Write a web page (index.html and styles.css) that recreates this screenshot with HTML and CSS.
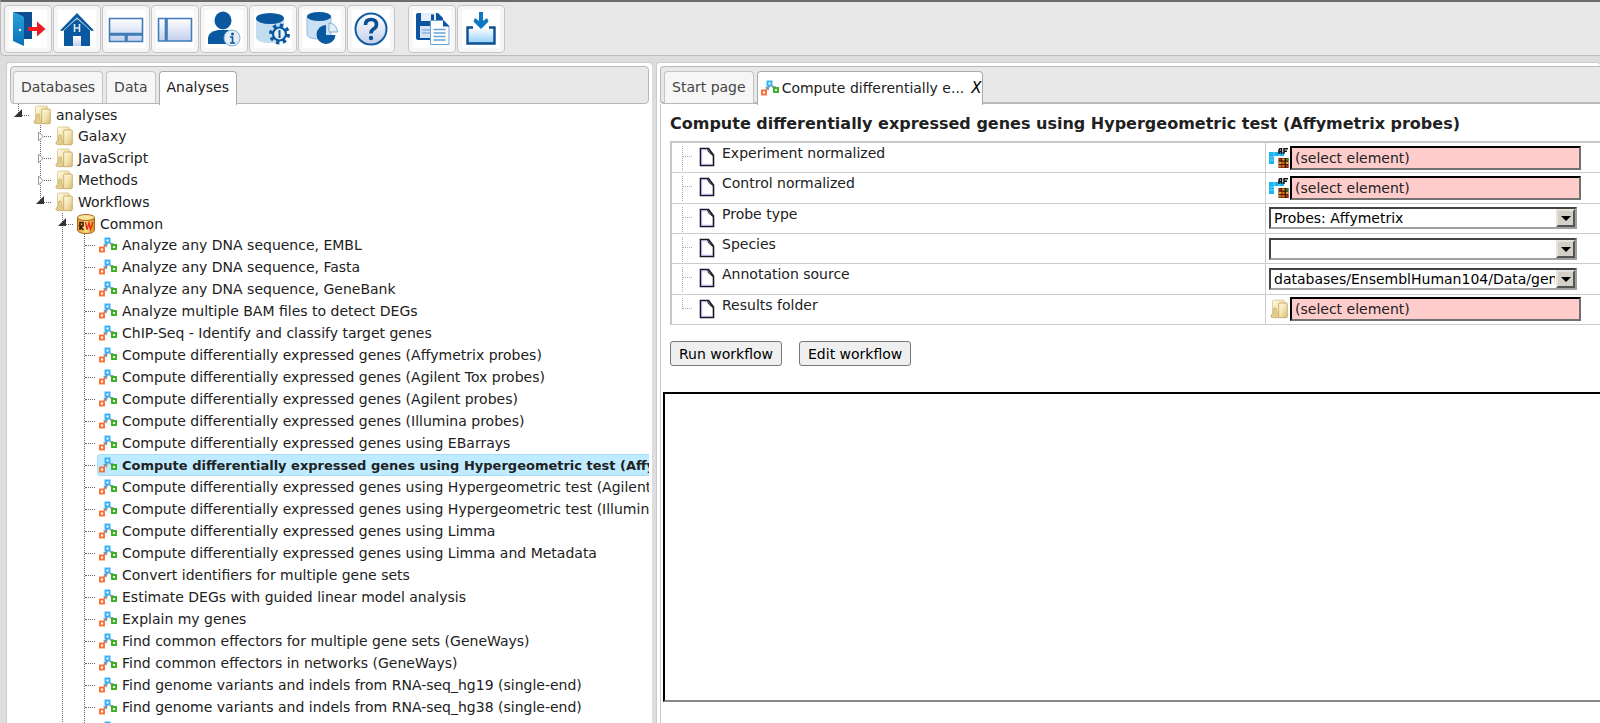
FILE: index.html
```
<!DOCTYPE html>
<html lang="en">
<head>
<meta charset="utf-8">
<title>Compute differentially expressed genes</title>
<link rel="stylesheet" href="styles.css">
</head>
<body>
<svg class="sprite" aria-hidden="true">
  <defs>
    <linearGradient id="g-folder" x1="0" x2="1" y1="0" y2="1"><stop offset="0" stop-color="#fffbe6"/><stop offset=".5" stop-color="#f3e3ae"/><stop offset="1" stop-color="#d8bd78"/></linearGradient>
    <linearGradient id="g-pane" x1="0" x2="0" y1="0" y2="1"><stop offset="0" stop-color="#fff"/><stop offset="1" stop-color="#c3cfec"/></linearGradient>
    <linearGradient id="g-door" x1="0" x2="0" y1="0" y2="1"><stop offset="0" stop-color="#2aa3e0"/><stop offset="1" stop-color="#0a6fb5"/></linearGradient>
    <linearGradient id="g-tray" x1="0" x2="0" y1="0" y2="1"><stop offset="0" stop-color="#fff"/><stop offset="1" stop-color="#8fd0fb"/></linearGradient>
    <linearGradient id="g-gold" x1="0" x2="1" y1="0" y2="0"><stop offset="0" stop-color="#e89a20"/><stop offset=".5" stop-color="#fbe08a"/><stop offset="1" stop-color="#dd8d18"/></linearGradient>
  </defs>
  <symbol id="folder" viewBox="0 0 18 20">
    <path d="M0 17l3-3v5z" fill="#ccc"/>
    <path d="M2.500 2.500Q2.500 1 4 1h9q1.500 0 1.500 1.500V15l-5 3.500h-7z" fill="url(#g-folder)" stroke="#d3bb7e" stroke-width=".7"/>
    <path d="M1 18q0-3.500 2.500-4V9.500q1.500-1.500 3 0V14q2 .5 2 4.500-3 1-7.500-.5z" fill="#e2cc90" stroke="#c9ae69" stroke-width=".6"/>
    <rect x="8.700" y="4" width="8.600" height="14.700" rx="1" fill="url(#g-folder)" stroke="#bea35e" stroke-width=".8"/>
  </symbol>
  <symbol id="flow" viewBox="0 0 18 16">
    <path d="M5 10l3-4M11 6l3.500 3" fill="none" stroke="#9aa3a8" stroke-width="1.800"/>
    <path d="M4 7.500l5-1.500-1.500 4.500zM11 6.500l3.500-.5v4z" fill="#8b9499"/>
    <rect x="6.500" y="1.500" width="4" height="4" fill="#fff" stroke="#2fb0f8" stroke-width="1.900"/>
    <rect x="1" y="10.500" width="4" height="4" fill="#fff" stroke="#fb6f33" stroke-width="1.900"/>
    <rect x="13" y="8" width="4" height="4" fill="#e9fbe4" stroke="#37ae20" stroke-width="1.900"/>
  </symbol>
  <symbol id="page" viewBox="0 0 16 20">
    <path d="M1.500 1.500h8L14.500 8v10.500h-13z" fill="#fff" stroke="#15152a" stroke-width="1.600"/>
    <path d="M2.700 17.500V2.700h5.500M2.700 17.300h10.600" fill="none" stroke="#aaaee8"/>
    <path d="M8.500 1.500L9.500 5l5 4z" fill="#aaa" stroke="#333" stroke-width="1"/>
  </symbol>
  <symbol id="affy" viewBox="0 0 20 20">
    <path d="M0 4h15v4H5v8H0z" fill="#19b5f2"/><path d="M1 9h4M5 4v4M10 4v4M1 12h4" stroke="#8de0ff" stroke-width=".8"/>
    <path d="M10 6V2l1-1.500h1.500V6M10 3.500h2.500M15 6V.8h4M15 3.300h3" fill="none" stroke="#111" stroke-width="1.500"/>
    <rect x="9.500" y="10" width="10" height="10" fill="#3a1c08"/>
    <path d="M10 10.500h2.500v2H10zM17 17h2.500v2.500H17z" fill="#c22617"/>
    <path d="M13.200 10.500h2.300v2h-2.300zM10 13.700h2.500v2.300H10zM17 13.700h2.300V16H17z" fill="#f39a1e"/>
    <path d="M17 10.500h2.500v2H17z" fill="#2c9a34"/><path d="M13.200 13.700h2.300V16h-2.300zM13.200 17h2.300v2.500h-2.300zM10 17h2.500v2.500H10z" fill="#e3701a"/>
  </symbol>
</svg>

<nav class="toolbar" aria-label="Main">
  <button class="tool" aria-label="Log out"><svg viewBox="0 0 36 36"><path d="M13 2h9v26h-9z" fill="#0b4f93"/><path d="M3 1l11 5v29L3 30z" fill="url(#g-door)"/><path d="M3 1h19v18h-8V6z" fill="#0b4f93"/><circle cx="10" cy="19" r="1.200" fill="#fff"/><path d="M18 16h9v-5.500l8.500 7.500-8.500 7.500V20h-9z" fill="#ed1c24"/></svg></button>
  <button class="tool" aria-label="Home"><svg viewBox="0 0 36 36"><path d="M5 18L18 8l13 10v17H5z" fill="#0a59a0"/><path d="M1 19.500L18 2l17 17.500-3 .5L18 7 4 20z" fill="#0a59a0"/><path d="M4 20L18 6.800 32 20" fill="none" stroke="#dbe8f5" stroke-width=".8"/><path d="M15.500 13v8M20.500 13v8M15.500 17h5" stroke="#dbe8f5" stroke-width="1.600"/><path d="M14 25h8v10h-8z" fill="url(#g-pane)"/></svg></button>
  <button class="tool" aria-label="Bottom pane layout"><svg viewBox="0 0 36 36"><path d="M1.500 7.500h33v15h-33zM1.500 24h16v6.500h-16zM19 24h15.500v6.500H19z" fill="url(#g-pane)" stroke="#3f7cb8" stroke-width="1.600"/></svg></button>
  <button class="tool" aria-label="Side pane layout"><svg viewBox="0 0 36 36"><path d="M1.500 7.500H8.500v22.500h-7zM10 7.500h24.500v22.500H10z" fill="url(#g-pane)" stroke="#3f7cb8" stroke-width="1.600"/></svg></button>
  <button class="tool" aria-label="User info"><svg viewBox="0 0 36 36"><ellipse cx="17" cy="9.500" rx="8.500" ry="9" fill="#0a59a0"/><path d="M2 33v-6q0-6 10-8h10q10 2 10 8v6z" fill="#0a59a0"/><circle cx="26" cy="27" r="8" fill="#e4edf7" stroke="#7fb0d5"/><circle cx="26.500" cy="23" r="1.500" fill="#0a59a0"/><path d="M24 26h2.500v6M24 32h5" fill="none" stroke="#0a59a0" stroke-width="1.600"/></svg></button>
  <button class="tool" aria-label="Database settings"><svg viewBox="0 0 36 36"><path d="M1 7v20q2 5 14 5t14-5V7z" fill="#c3ddf0"/><ellipse cx="15" cy="7.500" rx="14" ry="5.500" fill="#0a59a0"/><circle cx="24.500" cy="23" r="8.500" fill="none" stroke="#0a59a0" stroke-width="4" stroke-dasharray="3.300 3.375"/><circle cx="24.500" cy="23" r="6.500" fill="#e8f2fa" stroke="#0a59a0" stroke-width="2.200"/><path d="M24.500 19v8" stroke="#0a59a0" stroke-width="2"/></svg></button>
  <button class="tool" aria-label="Database statistics"><svg viewBox="0 0 36 36"><path d="M3 6v18q2 4 12 4t12-4V6z" fill="#c9e1f2" stroke="#8dbcdc"/><ellipse cx="15" cy="5.500" rx="12" ry="4.500" fill="#0a59a0"/><path d="M22 14a9.500 9.500 0 1 0 9.500 10H22z" fill="#0a59a0"/><path d="M25 12q8 1 8.500 9H25z" fill="#e4eff8" stroke="#7fb0d5"/></svg></button>
  <button class="tool" aria-label="Help"><svg viewBox="0 0 36 36"><circle cx="18" cy="18" r="15.500" fill="url(#g-pane)" stroke="#0f5ca3" stroke-width="2"/><path d="M12.500 14q0-5.500 5.500-5.500t5.500 5q0 3-3 4.500-2.500 1.500-2.500 4.500" fill="none" stroke="#0b4f93" stroke-width="3.600"/><circle cx="18" cy="27" r="2.200" fill="#0b4f93"/></svg></button>
  <span class="tool-gap"></span>
  <button class="tool" aria-label="Save a copy"><svg viewBox="0 0 36 36"><path d="M4 2h20l5 5v20q0 2-2 2H4q-2 0-2-2V4q0-2 2-2z" fill="#0b55a0"/><path d="M7 2h15v8H7z" fill="#e6eefb"/><path d="M17 3.500h3V9h-3z" fill="#0b55a0"/><path d="M6 15h18v12H6z" fill="#d6e2f6"/><path d="M8 19h8M8 22h8" stroke="#6a9bd0"/><path d="M16.500 9.500H30l5 5.500v18.500H16.500z" fill="#fff" stroke="#6aa3d4"/><path d="M29 9v6.500h6.500z" fill="#0b55a0"/><path d="M19.500 18.500h12M19.500 22h12M19.500 25.500h12M19.500 29h12" stroke="#6aa3d4" stroke-width="1.300"/></svg></button>
  <button class="tool" aria-label="Import"><svg viewBox="0 0 36 36"><path d="M10 16.500H4.500v16h27v-16H26" fill="url(#g-tray)" stroke="#0d4f8e" stroke-width="2.400"/><path d="M16 1h4v9l4-3 1.500 3.500L18 18l-7.500-7.500L12 7l4 3z" fill="#0a78c2"/></svg></button>
</nav>

<main class="workspace">
  <section class="pane" aria-label="Repository">
    <div class="tabs" role="tablist">
      <button class="tab" role="tab">Databases</button>
      <button class="tab" role="tab">Data</button>
      <button class="tab tab-active" role="tab" aria-selected="true">Analyses</button>
    </div>
    <ul class="tree">
      <li class="last"><div class="row open"><a class="node" href="#"><svg><use href="#folder"/></svg>analyses</a></div>
        <ul class="tight">
          <li><div class="row closed"><a class="node" href="#"><svg><use href="#folder"/></svg>Galaxy</a></div></li>
          <li><div class="row closed"><a class="node" href="#"><svg><use href="#folder"/></svg>JavaScript</a></div></li>
          <li><div class="row closed"><a class="node" href="#"><svg><use href="#folder"/></svg>Methods</a></div></li>
          <li class="last"><div class="row open"><a class="node" href="#"><svg><use href="#folder"/></svg>Workflows</a></div>
            <ul>
              <li><div class="row open"><a class="node" href="#"><svg viewBox="0 0 18 20"><path d="M.5 3.500v13Q2 19.500 9 19.500t8.500-3v-13z" fill="url(#g-gold)" stroke="#a8651a"/><ellipse cx="9" cy="3.500" rx="8.500" ry="3" fill="#fae39a" stroke="#a8651a"/><path d="M3 16V8.500h3v3.500H3l3.500 4" fill="none" stroke="#3a2005" stroke-width="1.600"/><path d="M8.500 8l1.500 7.500L12 9l1.500 6.500L16 8" fill="none" stroke="#e2331d" stroke-width="1.500"/></svg>Common</a></div>
                <ul class="tight">
                  <li><div class="row"><a class="node" href="#"><svg><use href="#flow"/></svg>Analyze any DNA sequence, EMBL</a></div></li>
                  <li><div class="row"><a class="node" href="#"><svg><use href="#flow"/></svg>Analyze any DNA sequence, Fasta</a></div></li>
                  <li><div class="row"><a class="node" href="#"><svg><use href="#flow"/></svg>Analyze any DNA sequence, GeneBank</a></div></li>
                  <li><div class="row"><a class="node" href="#"><svg><use href="#flow"/></svg>Analyze multiple BAM files to detect DEGs</a></div></li>
                  <li><div class="row"><a class="node" href="#"><svg><use href="#flow"/></svg>ChIP-Seq - Identify and classify target genes</a></div></li>
                  <li><div class="row"><a class="node" href="#"><svg><use href="#flow"/></svg>Compute differentially expressed genes (Affymetrix probes)</a></div></li>
                  <li><div class="row"><a class="node" href="#"><svg><use href="#flow"/></svg>Compute differentially expressed genes (Agilent Tox probes)</a></div></li>
                  <li><div class="row"><a class="node" href="#"><svg><use href="#flow"/></svg>Compute differentially expressed genes (Agilent probes)</a></div></li>
                  <li><div class="row"><a class="node" href="#"><svg><use href="#flow"/></svg>Compute differentially expressed genes (Illumina probes)</a></div></li>
                  <li><div class="row"><a class="node" href="#"><svg><use href="#flow"/></svg>Compute differentially expressed genes using EBarrays</a></div></li>
                  <li><div class="row"><a class="node selected" href="#"><svg><use href="#flow"/></svg>Compute differentially expressed genes using Hypergeometric test (Affymetrix probes)</a></div></li>
                  <li><div class="row"><a class="node" href="#"><svg><use href="#flow"/></svg>Compute differentially expressed genes using Hypergeometric test (Agilent probes)</a></div></li>
                  <li><div class="row"><a class="node" href="#"><svg><use href="#flow"/></svg>Compute differentially expressed genes using Hypergeometric test (Illumina probes)</a></div></li>
                  <li><div class="row"><a class="node" href="#"><svg><use href="#flow"/></svg>Compute differentially expressed genes using Limma</a></div></li>
                  <li><div class="row"><a class="node" href="#"><svg><use href="#flow"/></svg>Compute differentially expressed genes using Limma and Metadata</a></div></li>
                  <li><div class="row"><a class="node" href="#"><svg><use href="#flow"/></svg>Convert identifiers for multiple gene sets</a></div></li>
                  <li><div class="row"><a class="node" href="#"><svg><use href="#flow"/></svg>Estimate DEGs with guided linear model analysis</a></div></li>
                  <li><div class="row"><a class="node" href="#"><svg><use href="#flow"/></svg>Explain my genes</a></div></li>
                  <li><div class="row"><a class="node" href="#"><svg><use href="#flow"/></svg>Find common effectors for multiple gene sets (GeneWays)</a></div></li>
                  <li><div class="row"><a class="node" href="#"><svg><use href="#flow"/></svg>Find common effectors in networks (GeneWays)</a></div></li>
                  <li><div class="row"><a class="node" href="#"><svg><use href="#flow"/></svg>Find genome variants and indels from RNA-seq_hg19 (single-end)</a></div></li>
                  <li><div class="row"><a class="node" href="#"><svg><use href="#flow"/></svg>Find genome variants and indels from RNA-seq_hg38 (single-end)</a></div></li>
                  <li><div class="row"><a class="node" href="#"><svg><use href="#flow"/></svg>Find genome variants and indels from full-genome NGS_hg19</a></div></li>
                </ul>
              </li>
            </ul>
          </li>
        </ul>
      </li>
    </ul>
  </section>

  <section class="pane" aria-label="Document">
    <div class="tabs tabs-open" role="tablist">
      <button class="tab" role="tab">Start page</button>
      <div class="tab tab-active tab-doc" role="tab" aria-selected="true"><svg><use href="#flow"/></svg><span>Compute differentially e...</span><button class="close" aria-label="Close tab">X</button></div>
    </div>
    <form class="document">
      <h1>Compute differentially expressed genes using Hypergeometric test (Affymetrix probes)</h1>
      <table class="props">
        <tr><th><div class="prop"><svg><use href="#page"/></svg><label for="exp">Experiment normalized</label></div></th>
          <td><div class="field"><svg><use href="#affy"/></svg><input id="exp" value="(select element)"></div></td></tr>
        <tr><th><div class="prop"><svg><use href="#page"/></svg><label for="ctl">Control normalized</label></div></th>
          <td><div class="field"><svg><use href="#affy"/></svg><input id="ctl" value="(select element)"></div></td></tr>
        <tr><th><div class="prop"><svg><use href="#page"/></svg><label for="probe">Probe type</label></div></th>
          <td><div class="choice"><select id="probe"><option>Probes: Affymetrix</option></select><span class="arrow"></span></div></td></tr>
        <tr><th><div class="prop"><svg><use href="#page"/></svg><label for="species">Species</label></div></th>
          <td><div class="choice"><select id="species"><option></option></select><span class="arrow"></span></div></td></tr>
        <tr><th><div class="prop"><svg><use href="#page"/></svg><label for="anno">Annotation source</label></div></th>
          <td><div class="choice"><select id="anno"><option>databases/EnsemblHuman104/Data/gene</option></select><span class="arrow"></span></div></td></tr>
        <tr><th><div class="prop prop-last"><svg><use href="#page"/></svg><label for="result">Results folder</label></div></th>
          <td><div class="field"><svg><use href="#folder"/></svg><input id="result" value="(select element)"></div></td></tr>
      </table>
      <div class="actions"><button type="button">Run workflow</button><button type="button">Edit workflow</button></div>
      <div class="log" role="log"></div>
    </form>
  </section>
</main>
</body>
</html>
```
FILE: styles.css
```
* { box-sizing: border-box; }
body {
  margin: 0;
  height: 100vh;
  overflow: hidden;
  display: flex;
  flex-direction: column;
  background: #ddd;
  color: #212121;
  font-family: "DejaVu Sans", Verdana, sans-serif;
  font-size: 14px;
}
button, input, select { font: inherit; color: inherit; }
ul { list-style: none; margin: 0; padding: 0; }
.sprite { position: absolute; width: 0; height: 0; }

/* Toolbar */
.toolbar {
  display: flex;
  gap: 1px;
  padding: 3px 4px 2px 3px;
  border-top: 2px solid #6b696a;
  border-bottom: 1px solid #bbb;
  border-left: 1px solid #bbb;
  border-radius: 0 0 0 5px;
  background: #e8e8e8;
}
.tool {
  width: 48px;
  height: 48px;
  padding: 4px;
  border: 1px solid #c5c5c5;
  border-radius: 4px;
  background: #f6f6f6;
}
.tool svg { display: block; width: 38px; height: 38px; padding: 1px; background: #fff; }
.tool-gap { width: 11px; }

/* Panes */
.workspace {
  flex: 1;
  min-height: 0;
  margin: 6px 0 0 6px;
  display: grid;
  grid-template-columns: 646fr 944fr;
  gap: 4px;
}
.pane {
  display: flex;
  flex-direction: column;
  min-width: 0;
  min-height: 0;
  padding: 3px 3px 0;
  border: solid #ccc;
  border-width: 1px 0 0 1px;
  border-radius: 4px 4px 0 0;
  background: #fff;
}
.pane + .pane { padding-right: 0; }
.tabs {
  flex: none;
  display: flex;
  gap: 3px;
  padding: 4px 3px 0 2px;
  height: 38px;
  border: 1px solid #b8b8b8;
  border-radius: 4px;
  background: #e8e8e8;
}
.tabs-open { padding-left: 3px; border-right: 0; border-radius: 4px 0 0 4px; border-bottom-width: 2px; }
.tab {
  height: 32px;
  padding: 0 7px 1px;
  border: 1px solid #c5c5c5;
  border-bottom: 0;
  border-radius: 4px 4px 0 0;
  background: #f6f6f6;
  color: #454545;
  white-space: nowrap;
}
.tab-active { height: 34px; padding-bottom: 3px; border-color: #aaa; background: #fff; color: #212121; }
.tab-doc { display: flex; align-items: center; gap: 3px; padding: 0 0 2px 3px; }
.tab-doc svg { width: 18px; height: 16px; }
.close { margin-left: 4px; padding: 0; border: 0; background: none; color: #000; font-style: italic; font-size: 15px; }

/* Tree */
.tree { flex: 1; min-height: 0; overflow: hidden; padding-left: 3px; white-space: nowrap; }
.tree ul { padding-left: 22px; }
.tree .tight { margin-top: -1px; }
.tree li {
  background: repeating-linear-gradient(#666 0 1px, #fff 1px 2px) 5px 0 / 1px 100% no-repeat;
}
.tree li.last { background-size: 1px 11px; }
.row {
  display: flex;
  height: 22px;
  padding-left: 18px;
  position: relative;
}
.row::before {
  content: "";
  position: absolute;
  left: 6px;
  top: 11px;
  width: 10px;
  border-top: 1px dotted #666;
}
.row.open::after {
  content: "";
  position: absolute;
  left: 1px;
  top: 5px;
  width: 8px;
  height: 8px;
  background: #333;
  clip-path: polygon(100% 0, 100% 100%, 0 100%);
}
.row.closed::after {
  content: "";
  position: absolute;
  left: 3px;
  top: 6px;
  width: 6px;
  height: 11px;
  background: url("data:image/svg+xml,%3Csvg xmlns='http://www.w3.org/2000/svg' viewBox='0 0 6 11'%3E%3Cpath d='M.5 1l4.500 4.500-4.500 4.500z' fill='%23fff' stroke='%23999'/%3E%3C/svg%3E");
}
.node {
  display: flex;
  align-items: center;
  gap: 5px;
  padding-left: 1px;
  border: 1px solid transparent;
  border-radius: 3px;
  color: #212121;
  text-decoration: none;
}
.node svg { flex: none; width: 18px; height: 20px; }
.selected { flex: 1; border-color: #a8def5; background: #beebff; font-size: 13px; font-weight: bold; }

/* Document */
.document {
  flex: 1;
  min-height: 0;
  display: flex;
  flex-direction: column;
  padding: 10px 0 21px 2px;
  border-left: 1px solid #ccc;
}
h1 { margin: 0 0 7px 7px; font-size: 16px; line-height: 20px; white-space: nowrap; }
.props {
  margin-left: 7px;
  height: 184px;
  border-collapse: collapse;
  table-layout: fixed;
  border: solid #c8c8c8;
  border-width: 2px 0 1px 2px;
}
.props tr { height: 30px; border-bottom: 1px solid #ccc; }
.props th { width: 64%; padding: 0; font-weight: normal; text-align: left; border-right: 1px solid #ccc; }
.props td { padding: 0 0 0 3px; }
.prop {
  display: flex;
  gap: 7px;
  height: 29px;
  padding: 3px 0 0 27px;
  background:
    repeating-linear-gradient(#aaa 0 1px, #fff 1px 2px) 10px 3px / 1px 25px no-repeat,
    repeating-linear-gradient(90deg, #aaa 0 1px, #fff 1px 2px) 11px 13px / 10px 1px no-repeat;
}
.prop-last { background-size: 1px 11px, 10px 1px; }
.prop svg { width: 16px; height: 20px; margin-top: 1px; }
.prop label { line-height: 14px; }
.field { display: flex; align-items: center; width: 312px; }
.field svg { flex: none; width: 20px; height: 20px; margin-right: 1px; }
.field input {
  flex: 1;
  min-width: 0;
  height: 24px;
  padding: 0 3px;
  border: 2px solid;
  border-color: #000 #707070 #707070 #000;
  background: #fcc;
  color: #222;
}
.choice { position: relative; width: 308px; }
.choice select {
  display: block;
  width: 100%;
  height: 22px;
  padding: 0 20px 0 3px;
  appearance: none;
  border: 2px solid;
  border-color: #444 #a0a0a0 #a0a0a0 #444;
  border-radius: 0;
  background: #fff;
  color: #000;
}
.arrow {
  position: absolute;
  top: 2px;
  right: 2px;
  width: 19px;
  height: 18px;
  border: 2px solid;
  border-color: #e6e3de #555 #555 #e6e3de;
  background: #d4d0c8;
  pointer-events: none;
}
.arrow::after {
  content: "";
  position: absolute;
  left: 3px;
  top: 5px;
  border: 5px solid transparent;
  border-top-color: #000;
  border-bottom: 0;
}
.actions { display: flex; gap: 17px; margin: 16px 0 26px 7px; }
.actions button {
  height: 25px;
  padding: 0 8px;
  border: 1px solid #777;
  border-radius: 3px;
  background: #efefef;
  color: #000;
}
.log { flex: 1; border: 2px solid; border-color: #000 #888 #888 #000; border-right: 0; }
```
